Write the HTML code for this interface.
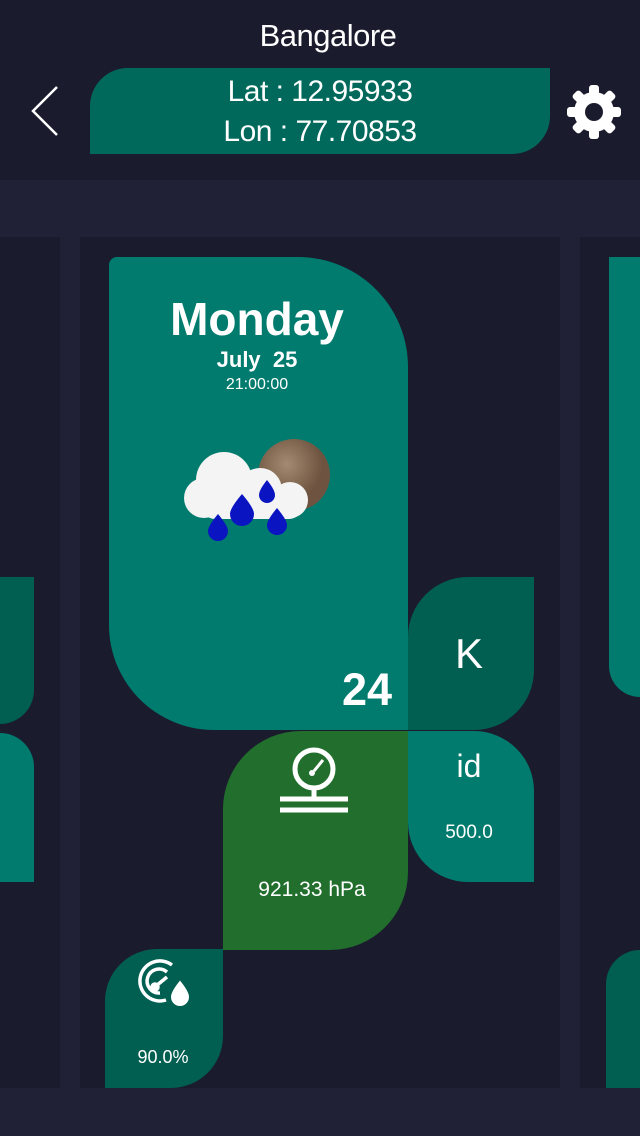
<!DOCTYPE html>
<html><head><meta charset="utf-8"><style>
*{margin:0;padding:0;box-sizing:border-box}
body{width:640px;height:1136px;background:#1b1b2e;position:relative;overflow:hidden;font-family:"Liberation Sans",sans-serif;color:#fff}
.a{position:absolute}
.t{text-align:center}
</style></head><body>
<div class="a t" style="left:0;top:18px;width:656px;font-size:31px;letter-spacing:-0.5px">Bangalore</div>
<svg class="a" style="left:28px;top:84px" width="34" height="54"><path d="M29 3 L5 27 L29 51" fill="none" stroke="#fff" stroke-width="2.5"/></svg>
<div class="a t" style="left:90px;top:68px;width:460px;height:86px;background:#00695c;border-radius:38px 0 38px 0;font-size:30px;line-height:40px;padding-top:4px;letter-spacing:-0.5px">Lat : 12.95933<br>Lon : 77.70853</div>
<svg class="a" style="left:564px;top:82px" width="60" height="60" viewBox="0 0 60 60"><g fill="#fff"><circle cx="30" cy="30" r="20"/><g id="tt"><rect x="25" y="3" width="10" height="12" rx="3"/><rect x="25" y="45" width="10" height="12" rx="3"/></g><use href="#tt" transform="rotate(45 30 30)"/><use href="#tt" transform="rotate(90 30 30)"/><use href="#tt" transform="rotate(135 30 30)"/></g><circle cx="30" cy="30" r="9" fill="#1b1b2e"/></svg>

<div class="a" style="left:0;top:180px;width:640px;height:57px;background:#202137"></div>
<div class="a" style="left:60px;top:237px;width:20px;height:851px;background:#202137"></div>
<div class="a" style="left:560px;top:237px;width:20px;height:851px;background:#202137"></div>
<div class="a" style="left:0;top:1088px;width:640px;height:48px;background:#202137"></div>

<div class="a" style="left:0;top:577px;width:34px;height:147px;background:#005f50;border-radius:0 0 34px 0"></div>
<div class="a" style="left:0;top:733px;width:34px;height:149px;background:#007b6e;border-radius:0 34px 0 0"></div>
<div class="a" style="left:609px;top:257px;width:31px;height:440px;background:#007b6e;border-radius:0 0 0 60px"></div>
<div class="a" style="left:606px;top:950px;width:34px;height:138px;background:#005f50;border-radius:40px 0 0 0"></div>

<div class="a" style="left:109px;top:257px;width:299px;height:473px;background:#007b6e;border-radius:8px 110px 0 105px"></div>
<div class="a t" style="left:137px;top:292px;width:240px;font-size:46px;font-weight:bold">Monday</div>
<div class="a t" style="left:137px;top:347px;width:240px;font-size:22px;font-weight:bold">July&nbsp; 25</div>
<div class="a t" style="left:137px;top:376px;width:240px;font-size:16px">21:00:00</div>
<svg class="a" style="left:180px;top:438px" width="152" height="106" viewBox="0 0 152 106">
<defs><radialGradient id="m" cx="0.4" cy="0.35"><stop offset="0" stop-color="#a48a70"/><stop offset="1" stop-color="#6e5440"/></radialGradient></defs>
<circle cx="114" cy="37" r="36" fill="url(#m)"/>
<g fill="#f4f4f4"><circle cx="44" cy="42" r="28"/><circle cx="80" cy="52" r="22"/><circle cx="110" cy="62" r="18"/><circle cx="24" cy="60" r="20"/><rect x="22" y="55" width="100" height="26" rx="13"/></g>
<g fill="#0a14c0"><path d="M87 42 q-8 10 -8 15 a8 8 0 0 0 16 0 q0 -5 -8 -15z"/><path d="M62 56 q-12 14 -12 20 a12 12 0 0 0 24 0 q0 -6 -12 -20z"/><path d="M97 70 q-10 12 -10 17 a10 10 0 0 0 20 0 q0 -5 -10 -17z"/><path d="M38 76 q-10 12 -10 17 a10 10 0 0 0 20 0 q0 -5 -10 -17z"/></g>
</svg>
<div class="a" style="left:300px;top:664px;width:92px;text-align:right;font-size:45px;font-weight:bold">24</div>

<div class="a" style="left:408px;top:577px;width:126px;height:153px;background:#005f50;border-radius:60px 0 60px 0"></div>
<div class="a t" style="left:408px;top:630px;width:122px;font-size:42px">K</div>
<div class="a" style="left:408px;top:731px;width:126px;height:151px;background:#007b6e;border-radius:0 60px 0 60px"></div>
<div class="a t" style="left:408px;top:748px;width:122px;font-size:32px">id</div>
<div class="a t" style="left:408px;top:822px;width:122px;font-size:19px">500.0</div>
<div class="a" style="left:223px;top:731px;width:185px;height:219px;background:#216e2d;border-radius:78px 0 78px 0"></div>
<svg class="a" style="left:278px;top:745px" width="72" height="72" viewBox="0 0 72 72" fill="none" stroke="#fff" stroke-width="5"><circle cx="36" cy="24" r="19"/><line x1="36" y1="43" x2="36" y2="53"/><line x1="2" y1="54" x2="70" y2="54"/><line x1="2" y1="65" x2="70" y2="65"/><line x1="36" y1="26" x2="45" y2="15" stroke-width="3"/><circle cx="34" cy="28" r="3" fill="#fff" stroke="none"/></svg>
<div class="a t" style="left:223px;top:878px;width:178px;font-size:21px">921.33 hPa</div>
<div class="a" style="left:105px;top:949px;width:118px;height:139px;background:#005f50;border-radius:52px 0 52px 0"></div>
<svg class="a" style="left:136px;top:955px" width="56" height="52" viewBox="0 0 56 52" fill="none" stroke="#fff" stroke-width="3.5"><path d="M36 10 A20 20 0 1 0 30 45"/><path d="M31 17 A12 12 0 1 0 24 38"/><line x1="20" y1="31" x2="31" y2="22"/><circle cx="19" cy="32" r="3" fill="#fff"/><path d="M44 24 q-10 12 -10 18 a10 10 0 0 0 20 0 q0 -6 -10 -18z" fill="#fff" stroke="#005f50" stroke-width="2"/></svg>
<div class="a t" style="left:105px;top:1047px;width:116px;font-size:18px">90.0%</div>
</body></html>
